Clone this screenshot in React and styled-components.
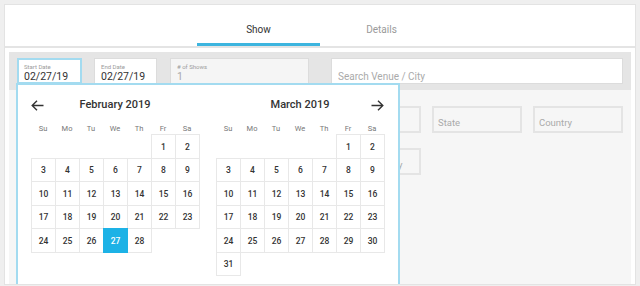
import React from "react";
import styled, { createGlobalStyle, css } from "styled-components";

const GlobalStyle = createGlobalStyle`
  body {
    margin: 0;
    background: #efefef;
    font-family: Roboto, "Liberation Sans", sans-serif;
  }
`;

// card that holds tabs and the search panel
const Card = styled.div`
  margin: 4px 4px 0;
  height: 281px;
  box-sizing: border-box;
  background: #fff;
  border: 1px solid #e3e3e3;
  overflow: hidden;
`;

const TabBar = styled.div`
  display: flex;
  justify-content: center;
  height: 41px;
  border-bottom: 2px solid #e4e4e4;
`;

const Tab = styled.div`
  position: relative;
  width: 123px;
  padding-top: 19px;
  box-sizing: border-box;
  text-align: center;
  font-size: 10px;
  line-height: 12px;
  color: #9a9a9a;
  ${(props) =>
    props.active &&
    css`
      color: #333;
      &::after {
        content: "";
        position: absolute;
        left: 0;
        right: 0;
        bottom: 0;
        height: 3px;
        background: #3db5df;
      }
    `}
`;

const Panel = styled.div`
  margin: 4px 4px 0;
  height: 240px;
  background: #f6f6f6;
`;

const FieldRow = styled.div`
  position: relative;
  display: flex;
  height: 38px;
  box-sizing: border-box;
  padding: 6px 8px;
  background: #e5e5e5;
`;

const Field = styled.div`
  width: ${(props) => props.width || "auto"};
  flex: ${(props) => (props.grow ? 1 : "none")};
  margin-right: ${(props) => props.gap || "0px"};
  height: 26px;
  box-sizing: border-box;
  padding: 4px 6px 0;
  background: ${(props) => (props.disabled ? "#f5f5f5" : "#fff")};
  border: 1px solid #dcdcdc;
  ${(props) =>
    props.focused &&
    css`
      border: 2px solid #a3dbf0;
      padding: 3px 5px 0;
    `}
`;

const Label = styled.div`
  font-size: 6px;
  line-height: 7px;
  color: #9b9b9b;
`;

const Value = styled.div`
  margin-top: 1px;
  font-size: 10.5px;
  line-height: 12px;
  color: ${(props) => (props.muted ? "#aaa" : "#333")};
`;

const Placeholder = styled.div`
  padding-top: 8px;
  font-size: 10px;
  line-height: 12px;
  color: #aaa;
`;

const FilterArea = styled.div`
  display: flex;
  justify-content: flex-end;
  padding: 16px 8px 0;
`;

const FilterGrid = styled.div`
  display: grid;
  grid-template-columns: repeat(3, 90px);
  column-gap: 11px;
  row-gap: 15px;
`;

const FilterBox = styled.div`
  height: 27px;
  box-sizing: border-box;
  padding: 9px 0 0 4px;
  border: 2px solid #e4e4e4;
  font-size: 9.5px;
  line-height: 12px;
  color: #aaa;
  white-space: nowrap;
  overflow: hidden;
`;

// date picker dropdown
const Popup = styled.div`
  position: absolute;
  left: 7px;
  top: 31px;
  width: 384px;
  height: 220px;
  box-sizing: border-box;
  padding: 13px 14px 0 13px;
  display: flex;
  gap: 17px;
  background: #fff;
  border: 2px solid #a3dbf0;
`;

const Month = styled.div`
  width: 168px;
`;

const MonthHead = styled.div`
  display: grid;
  grid-template-columns: 24px 1fr 24px;
  align-items: center;
  height: 14px;
`;

const Title = styled.div`
  text-align: center;
  font-size: 11px;
  font-weight: 500;
  line-height: 14px;
  color: #333;
`;

const Arrow = styled.svg`
  justify-self: ${(props) => (props.right ? "end" : "start")};
  display: block;
`;

const WeekDays = styled.div`
  display: grid;
  grid-template-columns: repeat(7, 24px);
  margin-top: 12px;
  height: 10px;
`;

const WeekDay = styled.div`
  text-align: center;
  font-size: 7.5px;
  line-height: 10px;
  color: #777;
`;

const Days = styled.div`
  display: grid;
  grid-template-columns: repeat(7, 24px);
  grid-template-rows: 24px 23px 24px 23px 24px 23px;
`;

const Day = styled.div`
  width: calc(100% + 1px);
  height: calc(100% + 1px);
  box-sizing: border-box;
  display: flex;
  align-items: center;
  justify-content: center;
  font-size: 8.5px;
  font-weight: 500;
  color: #333;
  border: 1px solid #e8e8e8;
  ${(props) =>
    props.selected &&
    css`
      position: relative;
      background: #1db2e6;
      border-color: #1db2e6;
      color: #fff;
    `}
`;

const Blank = styled.div``;

function ArrowIcon({ right }) {
  return (
    <Arrow right={right} width="13" height="11" viewBox="0 0 13 11">
      {right ? (
        <path d="M0.5 5.5H12M7 0.8L11.8 5.5L7 10.2" fill="none" stroke="#333" strokeWidth="1.4" />
      ) : (
        <path d="M12.5 5.5H1M6 0.8L1.2 5.5L6 10.2" fill="none" stroke="#333" strokeWidth="1.4" />
      )}
    </Arrow>
  );
}

const weekDays = ["Su", "Mo", "Tu", "We", "Th", "Fr", "Sa"];

function MonthView({ title, offset, length, selected, arrow }) {
  const cells = [];
  for (let i = 0; i < offset; i++) cells.push(<Blank key={"b" + i} />);
  for (let d = 1; d <= length; d++) {
    cells.push(
      <Day key={d} selected={d === selected}>
        {d}
      </Day>
    );
  }
  return (
    <Month>
      <MonthHead>
        {arrow === "left" ? <ArrowIcon /> : <span />}
        <Title>{title}</Title>
        {arrow === "right" ? <ArrowIcon right /> : <span />}
      </MonthHead>
      <WeekDays>
        {weekDays.map((w) => (
          <WeekDay key={w}>{w}</WeekDay>
        ))}
      </WeekDays>
      <Days>{cells}</Days>
    </Month>
  );
}

export default function App() {
  return (
    <>
      <GlobalStyle />
      <Card>
        <TabBar>
          <Tab active>Show</Tab>
          <Tab>Details</Tab>
        </TabBar>
        <Panel>
          <FieldRow>
            <Field width="65px" gap="12px" focused>
              <Label>Start Date</Label>
              <Value>02/27/19</Value>
            </Field>
            <Field width="63px" gap="13px">
              <Label>End Date</Label>
              <Value>02/27/19</Value>
            </Field>
            <Field width="139px" gap="22px" disabled>
              <Label># of Shows</Label>
              <Value muted>1</Value>
            </Field>
            <Field grow>
              <Placeholder>Search Venue / City</Placeholder>
            </Field>

            <Popup>
              <MonthView title="February 2019" offset={5} length={28} selected={27} arrow="left" />
              <MonthView title="March 2019" offset={5} length={31} arrow="right" />
            </Popup>
          </FieldRow>
          <FilterArea>
            <FilterGrid>
              <FilterBox>City</FilterBox>
              <FilterBox>State</FilterBox>
              <FilterBox>Country</FilterBox>
              <FilterBox>Venue Capacity</FilterBox>
            </FilterGrid>
          </FilterArea>
        </Panel>
      </Card>
    </>
  );
}
